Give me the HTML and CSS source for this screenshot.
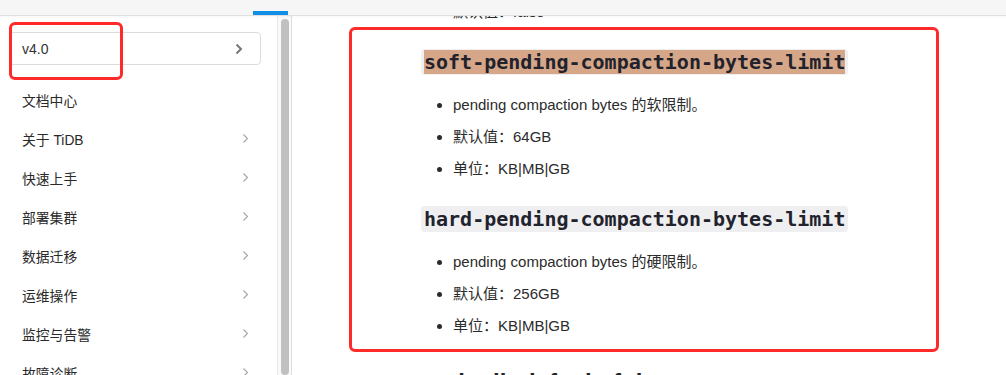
FILE: index.html
```html
<!DOCTYPE html>
<html lang="zh-CN">
<head>
    <meta charset="UTF-8">
    <meta name="viewport" content="width=device-width, initial-scale=1.0">
    <title>TiKV 配置文件描述</title>
    <link rel="stylesheet" href="styles.css">
</head>
<body>

    <!-- Top bar -->
    <div class="topbar">
        <div class="tab-indicator"></div>
    </div>

    <div class="page">

        <!-- Sidebar -->
        <div class="sidebar">
            <div class="version-select">
                <span>v4.0</span>
                <svg width="8" height="12" viewBox="0 0 8 12"><polyline points="1.5,1.5 6,6 1.5,10.5" fill="none" stroke="#777" stroke-width="2"/></svg>
            </div>
            <div class="annotation version-mark"></div>

            <ul class="nav">
                <li class="nav-item">文档中心</li>
                <li class="nav-item">关于 TiDB <svg class="chev" width="5" height="9" viewBox="0 0 5 9"><polyline points="0.5,0.5 4.5,4.5 0.5,8.5" fill="none" stroke="#a6a6a6" stroke-width="1.2"/></svg></li>
                <li class="nav-item">快速上手 <svg class="chev" width="5" height="9" viewBox="0 0 5 9"><polyline points="0.5,0.5 4.5,4.5 0.5,8.5" fill="none" stroke="#a6a6a6" stroke-width="1.2"/></svg></li>
                <li class="nav-item">部署集群 <svg class="chev" width="5" height="9" viewBox="0 0 5 9"><polyline points="0.5,0.5 4.5,4.5 0.5,8.5" fill="none" stroke="#a6a6a6" stroke-width="1.2"/></svg></li>
                <li class="nav-item">数据迁移 <svg class="chev" width="5" height="9" viewBox="0 0 5 9"><polyline points="0.5,0.5 4.5,4.5 0.5,8.5" fill="none" stroke="#a6a6a6" stroke-width="1.2"/></svg></li>
                <li class="nav-item">运维操作 <svg class="chev" width="5" height="9" viewBox="0 0 5 9"><polyline points="0.5,0.5 4.5,4.5 0.5,8.5" fill="none" stroke="#a6a6a6" stroke-width="1.2"/></svg></li>
                <li class="nav-item">监控与告警 <svg class="chev" width="5" height="9" viewBox="0 0 5 9"><polyline points="0.5,0.5 4.5,4.5 0.5,8.5" fill="none" stroke="#a6a6a6" stroke-width="1.2"/></svg></li>
                <li class="nav-item">故障诊断 <svg class="chev" width="5" height="9" viewBox="0 0 5 9"><polyline points="0.5,0.5 4.5,4.5 0.5,8.5" fill="none" stroke="#a6a6a6" stroke-width="1.2"/></svg></li>
            </ul>
        </div>

        <!-- Sidebar scrollbar -->
        <div class="scrollbar">
            <div class="scroll-thumb"></div>
        </div>

        <!-- Main content -->
        <div class="main">
            <div class="annotation content-mark"></div>

            <div class="article">
                <ul class="props">
                    <li>默认值：false</li>
                </ul>

                <h3><code><span class="hl">soft-pending-compaction-bytes-limit</span></code></h3>
                <ul class="props">
                    <li>pending compaction bytes 的软限制。</li>
                    <li>默认值：64GB</li>
                    <li>单位：KB|MB|GB</li>
                </ul>

                <h3><code>hard-pending-compaction-bytes-limit</code></h3>
                <ul class="props">
                    <li>pending compaction bytes 的硬限制。</li>
                    <li>默认值：256GB</li>
                    <li>单位：KB|MB|GB</li>
                </ul>

                <h2>rocksdb.defaultcf.titan</h2>
            </div>
        </div>

    </div>

</body>
</html>
```

FILE: styles.css
```css
body {
    margin: 0;
    height: 100vh;
    display: flex;
    flex-direction: column;
    overflow: hidden;
    background-color: #fff;
    font-family: "Liberation Sans", "Noto Sans CJK SC", sans-serif;
    color: #2b2b2b;
}

/* Top bar */
.topbar {
    height: 15px;
    flex-shrink: 0;
    display: flex;
    align-items: flex-end;
    background-color: #f6f6f6;
    border-bottom: 1px solid #e0e0e0;
    box-shadow: 0 1px 3px rgba(0, 0, 0, 0.04);
    position: relative;
    z-index: 2;
}
.tab-indicator {
    width: 35px;
    height: 4px;
    margin-left: 253px;
    background-color: #118fe6;
}

.page {
    flex: 1;
    min-height: 0;
    display: flex;
}

/* Sidebar */
.sidebar {
    width: 277px;
    flex-shrink: 0;
    box-sizing: border-box;
    padding: 16px 16px 0 9px;
    overflow: hidden;
    position: relative;
}
.version-select {
    height: 31px;
    display: flex;
    align-items: center;
    justify-content: space-between;
    padding: 0 17px 0 12px;
    border: 1px solid #dcdcdc;
    border-radius: 4px;
    font-size: 14px;
    color: #333;
}
.nav {
    list-style: none;
    margin: 15px 0 0 0;
    padding: 0;
}
.nav-item {
    height: 39px;
    display: flex;
    align-items: center;
    justify-content: space-between;
    padding: 0 13px 0 13px;
    font-size: 13.8px;
    color: #2a2a2a;
}

.scrollbar {
    width: 10px;
    flex-shrink: 0;
    border-left: 1px solid #e8e8e8;
    border-right: 1px solid #dedede;
    background-color: #fafafa;
    padding: 3px 0 0 3px;
}
.scroll-thumb {
    width: 8px;
    height: 100%;
    background-color: #c1c1c1;
    border-radius: 4px;
}

/* Main content */
.main {
    flex: 1;
    position: relative;
    overflow: hidden;
}
.article {
    margin-top: -16px;
    padding-left: 129px;
}
.props {
    margin: 0;
    padding-left: 32px;
    font-size: 15px;
    color: #2b2b2b;
}
.props li {
    line-height: 24px;
    margin-bottom: 8px;
}
.props li:last-child {
    margin-bottom: 0;
}
h3 {
    margin: 23px 0 16px 0;
    line-height: 30px;
    font-size: 20px;
}
h3 code {
    font-family: "DejaVu Sans Mono", monospace;
    font-weight: bold;
    font-size: 20px;
    color: #22222c;
    background-color: #efeff1;
    padding: 1px 3px;
    border-radius: 4px;
}
.hl {
    background-color: #d5a788;
}
h2 {
    margin: 27px 0 0 0;
    line-height: 36px;
    font-size: 24px;
    font-weight: bold;
    color: #222;
}

/* Red annotation boxes */
.annotation {
    position: absolute;
    border: 3px solid #ff2b2b;
    border-radius: 6px;
    box-sizing: border-box;
    z-index: 1;
}
.version-mark {
    left: 9px;
    top: 6px;
    width: 114px;
    height: 58px;
}
.content-mark {
    left: 57px;
    top: 11px;
    width: 590px;
    height: 325px;
}
```
